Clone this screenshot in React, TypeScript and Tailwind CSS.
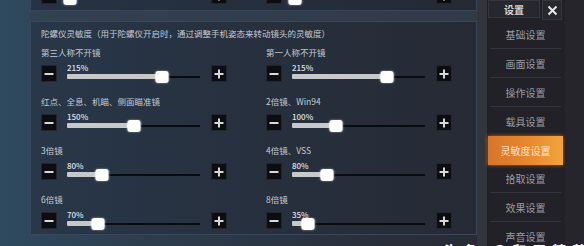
import React from 'react';

type Cell = { label: string; value: number };

const rows: Cell[][] = [
  [
    { label: '第三人称不开镜', value: 215 },
    { label: '第一人称不开镜', value: 215 },
  ],
  [
    { label: '红点、全息、机瞄、侧面瞄准镜', value: 150 },
    { label: '2倍镜、Win94', value: 100 },
  ],
  [
    { label: '3倍镜', value: 80 },
    { label: '4倍镜、VSS', value: 80 },
  ],
  [
    { label: '6倍镜', value: 70 },
    { label: '8倍镜', value: 35 },
  ],
];

const menu = ['基础设置', '画面设置', '操作设置', '载具设置', '灵敏度设置', '拾取设置', '效果设置', '声音设置'];
const activeIndex = 4;

function StepButton({ kind }: { kind: 'minus' | 'plus' }) {
  return (
    <div className="flex h-[17px] w-[16px] shrink-0 items-center justify-center border border-[#23262c] bg-[#0c0d10]">
      <svg width="10" height="10" viewBox="0 0 10 10">
        <rect x="0.5" y="4" width="9" height="2" fill="#d8d8d8" />
        {kind === 'plus' && <rect x="4" y="0.5" width="2" height="9" fill="#d8d8d8" />}
      </svg>
    </div>
  );
}

function Slider({ value, showText = true }: { value: number; showText?: boolean }) {
  // thumb position on the game's 0–300% scale
  const pct = (value / 300) * 100;
  return (
    <div className="flex h-[17px] items-center">
      <StepButton kind="minus" />
      <div className="ml-[10px] mr-[11px] flex h-full w-[133px] flex-col">
        <span className="-mt-[1px] h-[8px] text-[8px] leading-[8px] font-medium text-[#dfe1e4]">
          {showText ? `${value}%` : ''}
        </span>
        <div className="relative mt-[2px] h-[5px]">
          <div className="absolute inset-x-0 top-[1.5px] h-[2px] bg-[#0a0b0e]" />
          <div className="absolute left-0 top-0 h-[5px] rounded-l-[1px] bg-[#c6c8ca]" style={{ width: `${pct}%` }} />
          <div
            className="absolute top-[-3.5px] h-[12px] w-[13px] -translate-x-1/2 rounded-[3px] bg-white shadow-[0_0_2px_rgba(255,255,255,0.6)]"
            style={{ left: `${pct}%` }}
          />
        </div>
      </div>
      <StepButton kind="plus" />
    </div>
  );
}

export default function App() {
  return (
    <div className="relative flex h-[246px] w-[584px] overflow-hidden bg-[linear-gradient(90deg,#2e4a5e_0%,#2d3d4e_25%,#2a303c_60%,#27282f_100%)] font-['Noto_Sans_CJK_SC','Noto_Sans',sans-serif]">
      {/* settings area */}
      <div className="flex w-[477px] shrink-0 flex-col pl-[30px]">
        {/* bottom of the previous panel */}
        <div className="h-[11px] overflow-hidden border-x border-b border-[#39455a] bg-[linear-gradient(90deg,#263344,#252a34)]">
          <div className="-mt-[13px] grid grid-cols-[186px_186px] gap-x-[39px] pl-[10px]">
            <Slider value={6} showText={false} />
            <Slider value={6} showText={false} />
          </div>
        </div>
        <div className="h-[10px] bg-[#344050]/70" />
        <div className="h-[214px] border border-[#3a4659] bg-[linear-gradient(90deg,#283749_0%,#27303e_50%,#262a34_100%)]">
          <p className="pl-[10px] pt-[5px] text-[8.5px] leading-[12px] text-[#c4cad0]">
            陀螺仪灵敏度（用于陀螺仪开启时，通过调整手机姿态来转动镜头的灵敏度）
          </p>
          <div className="mt-[7px] grid grid-cols-[186px_186px] gap-x-[39px] gap-y-[13px] pl-[10px]">
            {rows.flat().map((c, i) => (
              <div key={i} className="flex flex-col">
                <span className="h-[12px] text-[8.5px] leading-[12px] text-[#c6cbd0]">{c.label}</span>
                <div className="mt-[7px]">
                  <Slider value={c.value} />
                </div>
              </div>
            ))}
          </div>
        </div>
      </div>

      <div className="w-[10px] shrink-0 bg-[#33353c]" />

      {/* side menu */}
      <div className="flex w-[78px] shrink-0 flex-col bg-[#212127] pl-[1px]">
        <div className="flex h-[18px] gap-[2px]">
          <div className="flex w-[52px] items-center justify-center border border-[#34363e] bg-[#26282e] text-[10px] font-semibold text-[#d6d6d8]">
            设置
          </div>
          <div className="flex h-[20px] w-[20px] items-center justify-center border border-[#34363e] bg-[#26282e]">
            <svg width="11" height="11" viewBox="0 0 11 11">
              <path d="M1.5 1.5 L9.5 9.5 M9.5 1.5 L1.5 9.5" stroke="#e8e8e8" strokeWidth="2" />
            </svg>
          </div>
        </div>
        <div className="mt-[2.6px] flex flex-col">
          {menu.map((m, i) => {
            const active = i === activeIndex;
            const divider = i < menu.length - 1 && !active && i + 1 !== activeIndex;
            return (
              <div key={m} className="flex h-[28.8px] w-[75px] flex-col">
                {active ? (
                  <div className="flex h-full items-center justify-center bg-[linear-gradient(90deg,#d8742a_0%,#ea8a30_60%,#f2a43e_100%)] text-[10px] text-[#fde7c9] shadow-[0_0_4px_rgba(240,140,50,0.7)]">
                    {m}
                  </div>
                ) : (
                  <div
                    className={`mx-[2px] flex h-full items-center justify-center text-[10px] text-[#9c9da3] ${
                      divider ? 'border-b border-[#34353c]' : ''
                    }`}
                  >
                    {m}
                  </div>
                )}
              </div>
            );
          })}
        </div>
      </div>

      <div className="flex-1 bg-[#25252b]" />

      {/* watermark, cut off by the bottom edge */}
      <div className="absolute left-[443px] top-[243px] whitespace-nowrap text-[14px] leading-[14px] font-bold tracking-[6px] text-white">
        头条 @和平精英攻略
      </div>
    </div>
  );
}
